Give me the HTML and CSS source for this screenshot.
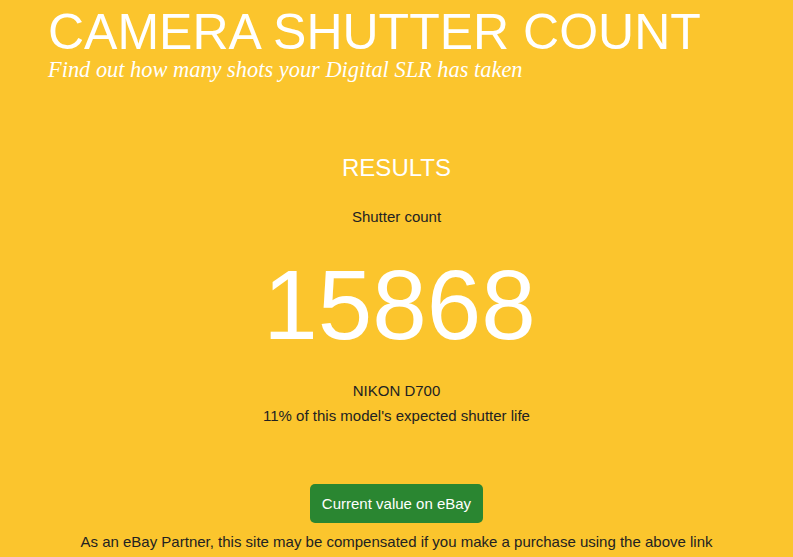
FILE: index.html
```html
<!DOCTYPE html>
<html lang="en">
<head>
    <meta charset="UTF-8" />
    <meta name="viewport" content="width=device-width, initial-scale=1.0" />
    <title>Camera Shutter Count</title>
    <link rel="stylesheet" href="styles.css">
</head>
<body>
    <header>
        <h1>CAMERA SHUTTER COUNT</h1>
        <p class="tagline">Find out how many shots your Digital SLR has taken</p>
    </header>

    <section id="resultados">
        <h2>RESULTS</h2>
        <p class="etiqueta">Shutter count</p>
        <div class="contador">15868</div>
        <p class="modelo">NIKON D700</p>
        <p class="vida">11% of this model's expected shutter life</p>

        <a class="boton-ebay" href="#">Current value on eBay</a>
        <p class="aviso">As an eBay Partner, this site may be compensated if you make a purchase using the above link</p>
    </section>
</body>
</html>
```

FILE: styles.css
```css
:root {
    --color-fondo: #fbc52d;
    --color-texto: #222222;
    --color-claro: #ffffff;
    --color-boton: #2a8631;
}

* {
    margin: 0;
    padding: 0;
    box-sizing: border-box;
}

body {
    font-family: 'Liberation Sans', Arial, sans-serif;
    background-color: var(--color-fondo);
    color: var(--color-texto);
    font-size: 15px;
}

header {
    padding: 6px 48px 0;
}

header h1 {
    font-size: 50px;
    font-weight: 400;
    color: var(--color-claro);
    line-height: 52px;
}

.tagline {
    font-family: 'Liberation Serif', Georgia, serif;
    font-style: italic;
    font-size: 22.4px;
    color: var(--color-claro);
    line-height: 24px;
}

section {
    text-align: center;
    padding-top: 71px;
}

section h2 {
    font-size: 24px;
    font-weight: 400;
    color: var(--color-claro);
    line-height: 30px;
}

.etiqueta {
    margin-top: 25px;
    line-height: 18px;
}

.contador {
    font-size: 98px;
    color: var(--color-claro);
    line-height: 120px;
    margin-top: 19px;
    padding-left: 6px;
}

.modelo {
    margin-top: 16px;
    line-height: 20px;
}

.vida {
    line-height: 20px;
    margin-top: 5px;
}

.boton-ebay {
    display: inline-block;
    margin-top: 58px;
    background-color: var(--color-boton);
    color: var(--color-claro);
    text-decoration: none;
    padding: 11px 12px;
    border-radius: 5px;
    line-height: 17px;
}

.aviso {
    margin-top: 10px;
    line-height: 18px;
}
```
